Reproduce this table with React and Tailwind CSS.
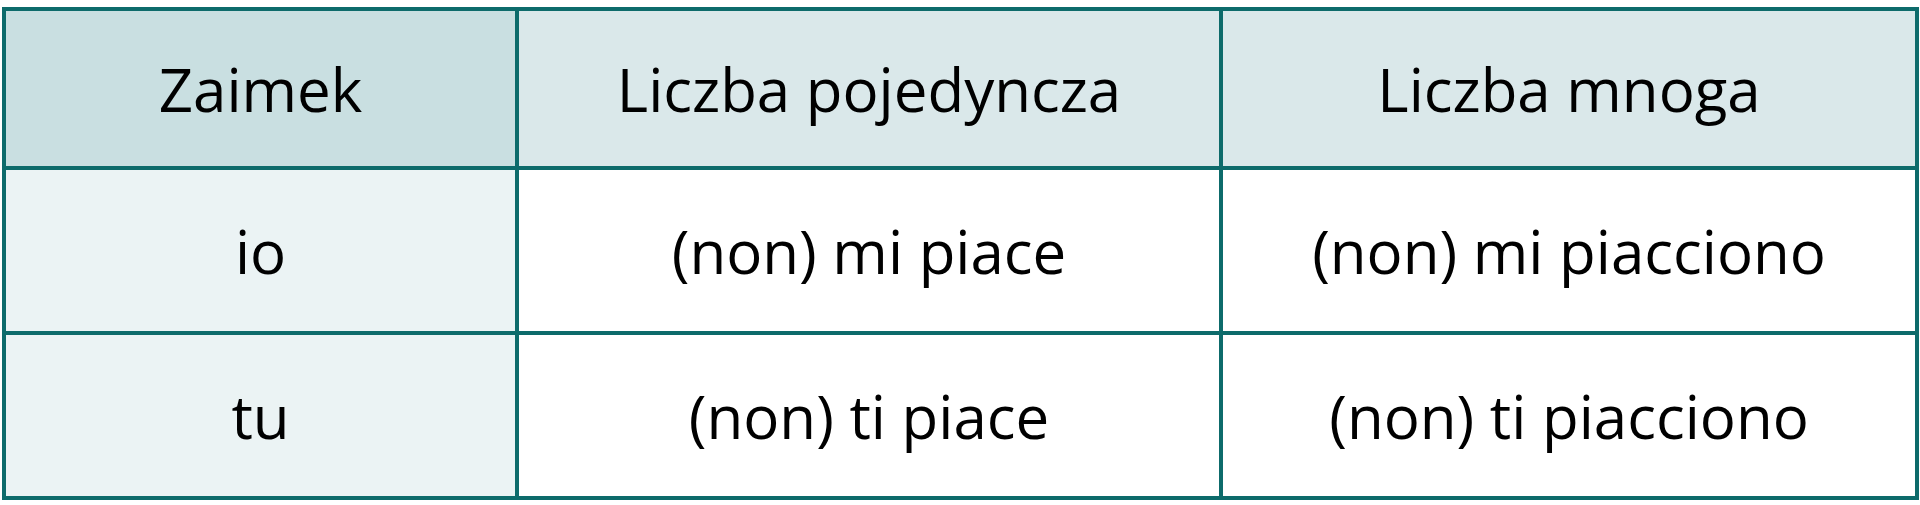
import React from 'react';

const rows = [
  ['io', '(non) mi piace', '(non) mi piacciono'],
  ['tu', '(non) ti piace', '(non) ti piacciono'],
];

export default function App() {
  return (
    <div className="w-[1920px] h-[505px] bg-white pt-[7px] pl-[2px]" style={{ fontFamily: '"Open Sans", sans-serif' }}>
      <div className="w-[1917px] grid grid-cols-[509px_700px_692px] grid-rows-[155px_161px_161px] gap-[4px] p-[4px] bg-[#0d6b6b] text-[60px] text-black">
        <div className="flex items-center justify-center bg-[#c9dfe1]">Zaimek</div>
        <div className="flex items-center justify-center bg-[#dae8ea]">Liczba pojedyncza</div>
        <div className="flex items-center justify-center bg-[#dae8ea]">Liczba mnoga</div>
        {rows.map((row) => (
          <React.Fragment key={row[0]}>
            <div className="flex items-center justify-center bg-[#ebf3f4]">{row[0]}</div>
            <div className="flex items-center justify-center bg-white">{row[1]}</div>
            <div className="flex items-center justify-center bg-white">{row[2]}</div>
          </React.Fragment>
        ))}
      </div>
    </div>
  );
}
